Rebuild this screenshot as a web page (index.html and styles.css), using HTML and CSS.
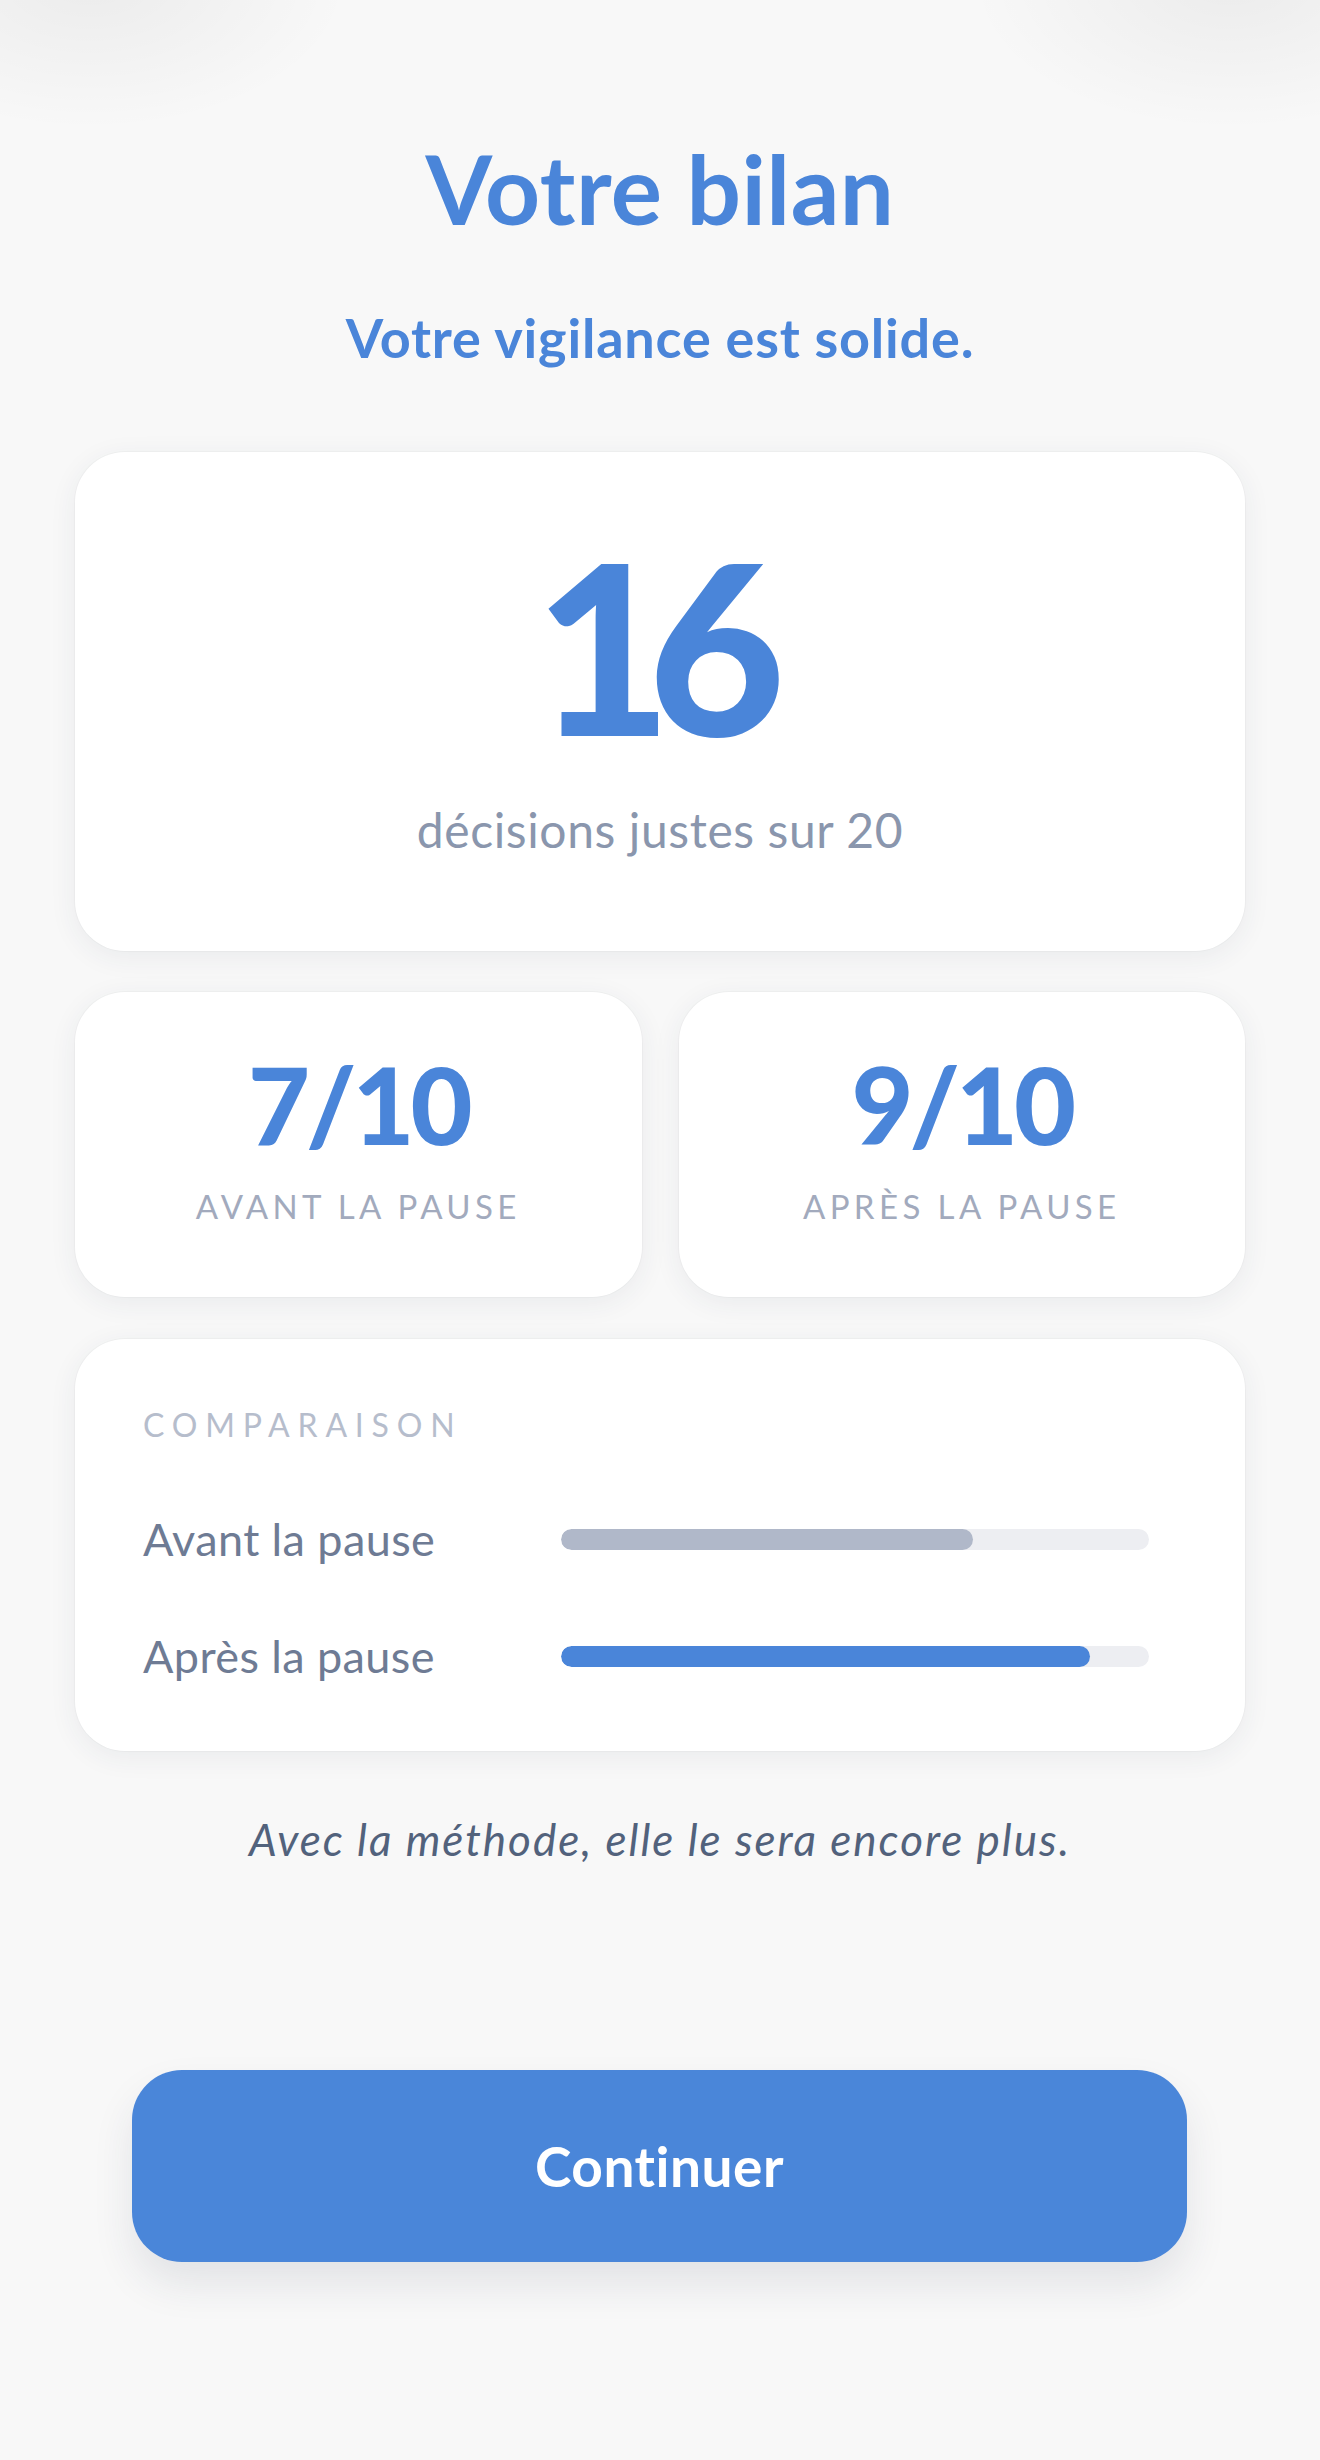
FILE: index.html
```html
<!DOCTYPE html>
<html lang="fr">
<head>
<meta charset="utf-8">
<title>Votre bilan</title>
<link rel="stylesheet" href="styles.css">
</head>
<body>
<div class="screen">
  <h1 class="title">Votre bilan</h1>
  <p class="subtitle">Votre vigilance est solide.</p>

  <section class="card score-card">
    <div class="score">16</div>
    <div class="score-caption">décisions justes sur 20</div>
  </section>

  <div class="split">
    <section class="card mini-card">
      <div class="mini-value">7/10</div>
      <div class="mini-label">AVANT LA PAUSE</div>
    </section>
    <section class="card mini-card">
      <div class="mini-value">9/10</div>
      <div class="mini-label">APRÈS LA PAUSE</div>
    </section>
  </div>

  <section class="card compare-card">
    <div class="compare-title">COMPARAISON</div>
    <div class="compare-rows">
      <div class="compare-row">
        <span class="row-label">Avant la pause</span>
        <div class="track"><div class="fill fill-before" style="width:70%"></div></div>
      </div>
      <div class="compare-row">
        <span class="row-label">Après la pause</span>
        <div class="track"><div class="fill fill-after" style="width:90%"></div></div>
      </div>
    </div>
  </section>

  <p class="note">Avec la méthode, elle le sera encore plus.</p>

  <div class="cta-wrap">
    <button class="cta">Continuer</button>
  </div>
</div>
</body>
</html>
```

FILE: styles.css
```css
* { box-sizing: border-box; }

html, body {
  margin: 0;
  padding: 0;
}

body {
  width: 1320px;
  min-height: 2460px;
  background-color: #f8f8f8;
  background-image:
    radial-gradient(ellipse 260px 150px at 90px -20px, rgba(0,0,0,0.05), rgba(0,0,0,0) 100%),
    radial-gradient(ellipse 260px 150px at 1230px -20px, rgba(0,0,0,0.05), rgba(0,0,0,0) 100%);
  background-repeat: no-repeat;
  font-family: "Lato", "Open Sans", sans-serif;
  line-height: 1.2;
}

.screen {
  padding: 130px 75px 0 75px;
  display: flex;
  flex-direction: column;
}

.title {
  margin: 0;
  text-align: center;
  font-size: 96px;
  font-weight: 700;
  color: #4a85d9;
  letter-spacing: 0.5px;
  line-height: 1.2;
}

.subtitle {
  margin: 61px 0 0 0;
  text-align: center;
  font-size: 54px;
  font-weight: 700;
  color: #4a85d9;
  letter-spacing: 0.8px;
  line-height: 1.2;
}

.card {
  background: #ffffff;
  border-radius: 50px;
  box-shadow: 0 6px 28px rgba(40, 50, 80, 0.07), 0 0 0 1px rgba(0,0,0,0.025);
}

.score-card {
  margin-top: 81px;
  height: 499px;
  padding-top: 50px;
  text-align: center;
}

.score {
  font-size: 237px;
  font-weight: 900;
  color: #4a85d9;
  letter-spacing: -24px;
  line-height: 1.2;
  padding-right: 24px;
}

.score-caption {
  margin-top: 15px;
  font-size: 48px;
  color: #8a96ad;
  letter-spacing: 0.6px;
  line-height: 1.2;
}

.split {
  margin-top: 41px;
  display: grid;
  grid-template-columns: 1fr 1fr;
  column-gap: 37px;
}

.mini-card {
  height: 305px;
  padding-top: 48px;
  text-align: center;
}

.mini-value {
  font-size: 107px;
  font-weight: 900;
  color: #4a85d9;
  letter-spacing: -4px;
  line-height: 1.2;
}

.mini-label {
  margin-top: 19px;
  font-size: 33px;
  color: #a2aabd;
  letter-spacing: 4.4px;
  line-height: 1.2;
}

.compare-card {
  margin-top: 42px;
  height: 412px;
  padding: 67px 96px 0 68px;
}

.compare-title {
  font-size: 32px;
  color: #b6bdcc;
  letter-spacing: 7.8px;
  line-height: 1.2;
}

.compare-rows {
  margin-top: 68px;
  display: flex;
  flex-direction: column;
  gap: 65px;
}

.compare-row {
  display: grid;
  grid-template-columns: 418px 1fr;
  align-items: center;
  height: 52px;
}

.row-label {
  font-size: 45px;
  color: #6e7b94;
  letter-spacing: 0.4px;
  line-height: 1.2;
}

.track {
  height: 21px;
  border-radius: 11px;
  background: #edeef2;
  overflow: hidden;
}

.fill {
  height: 100%;
  border-radius: 11px;
}

.fill-before { background: #b0b8c9; }
.fill-after { background: #4a85d9; }

.note {
  margin: 62px 0 0 0;
  text-align: center;
  font-size: 44px;
  font-style: italic;
  color: #52627c;
  letter-spacing: 2px;
  line-height: 1.2;
}

.cta-wrap {
  margin-top: 204px;
  padding: 0 58px 0 57px;
}

.cta {
  display: block;
  width: 100%;
  height: 192px;
  border: none;
  border-radius: 50px;
  background: #4a86d9;
  color: #ffffff;
  font-family: "Lato", "Open Sans", sans-serif;
  font-size: 55px;
  font-weight: 700;
  letter-spacing: 0.5px;
  box-shadow: 0 22px 40px rgba(40, 50, 80, 0.10);
  cursor: pointer;
}
```
